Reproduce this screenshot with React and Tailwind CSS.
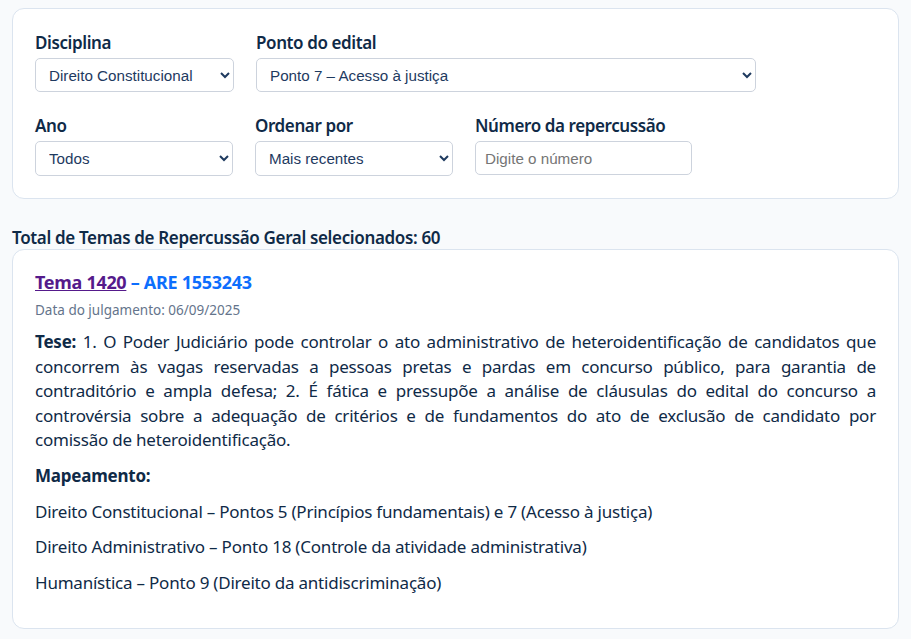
function Field({ label, children, className = "" }) {
  return (
    <div className={`flex flex-col ${className}`}>
      <label className="text-[17px] leading-[24px] font-semibold text-[#0f2a47] tracking-[-0.4px] mb-[3px]">{label}</label>
      {children}
    </div>
  );
}

const selectCls = "bg-white border border-[#cdd3dd] rounded-[5px] pl-[9px] pr-[2px] text-[15.2px] text-[#1e3a5f] font-['Liberation_Sans'] outline-none";

export default function App() {
  return (
    <div className="min-h-[639px] bg-[#f8fafc] px-[12px] pt-[8px] pb-[10px] font-['Noto_Sans',sans-serif]">
      <div className="bg-white border border-[#dbe4ef] rounded-[12px] pl-[22px] pt-[22px] pb-[22px]">
        <div className="flex gap-[22px]">
          <Field label="Disciplina" className="w-[199px]">
            <select className={`${selectCls} h-[34px] w-[199px]`} defaultValue="a"><option value="a">Direito Constitucional</option></select>
          </Field>
          <Field label="Ponto do edital" className="w-[500px]">
            <select className={`${selectCls} h-[34px] w-[500px]`} defaultValue="a"><option value="a">Ponto 7 – Acesso à justiça</option></select>
          </Field>
        </div>
        <div className="flex gap-[22px] mt-[22px]">
          <Field label="Ano" className="w-[198px]">
            <select className={`${selectCls} h-[35px] w-[198px]`} defaultValue="a"><option value="a">Todos</option></select>
          </Field>
          <Field label="Ordenar por" className="w-[198px]">
            <select className={`${selectCls} h-[35px] w-[198px]`} defaultValue="a"><option value="a">Mais recentes</option></select>
          </Field>
          <Field label="Número da repercussão" className="w-[217px]">
            <input placeholder="Digite o número" className="h-[34px] w-[217px] bg-white border border-[#cdd3dd] rounded-[5px] px-[9px] text-[15.2px] font-['Liberation_Sans'] outline-none placeholder:text-[#757575]" />
          </Field>
        </div>
      </div>

      <div className="mt-[27px] text-[17px] leading-[23px] font-semibold text-[#0f2a47] tracking-[-0.35px]">Total de Temas de Repercussão Geral selecionados: 60</div>

      <div className="bg-white border border-[#dbe4ef] rounded-[12px] h-[380px] px-[22px] pt-[19px]">
        <h3 className="text-[18px] leading-[26px] font-bold text-[#0d6efd] tracking-[-0.3px]">
          <a href="#v" className="text-[#551a8b] underline">Tema 1420</a> – ARE 1553243
        </h3>
        <p className="mt-[6px] text-[13.5px] leading-[18px] text-[#64748b]">Data do julgamento: 06/09/2025</p>
        <p className="mt-[11px] text-[17px] leading-[24.6px] text-[#0f2a47] text-justify tracking-[-0.22px]">
          <strong className="font-bold">Tese:</strong> 1. O Poder Judiciário pode controlar o ato administrativo de heteroidentificação de candidatos que concorrem às vagas reservadas a pessoas pretas e pardas em concurso público, para garantia de contraditório e ampla defesa; 2. É fática e pressupõe a análise de cláusulas do edital do concurso a controvérsia sobre a adequação de critérios e de fundamentos do ato de exclusão de candidato por comissão de heteroidentificação.
        </p>
        <p className="mt-[11px] text-[17px] leading-[24.6px] font-bold text-[#0f2a47] tracking-[-0.22px]">Mapeamento:</p>
        <p className="mt-[11px] text-[17px] leading-[24.6px] text-[#0f2a47] tracking-[-0.22px]">Direito Constitucional – Pontos 5 (Princípios fundamentais) e 7 (Acesso à justiça)</p>
        <p className="mt-[11px] text-[17px] leading-[24.6px] text-[#0f2a47] tracking-[-0.22px]">Direito Administrativo – Ponto 18 (Controle da atividade administrativa)</p>
        <p className="mt-[11px] text-[17px] leading-[24.6px] text-[#0f2a47] tracking-[-0.22px]">Humanística – Ponto 9 (Direito da antidiscriminação)</p>
      </div>
    </div>
  );
}
